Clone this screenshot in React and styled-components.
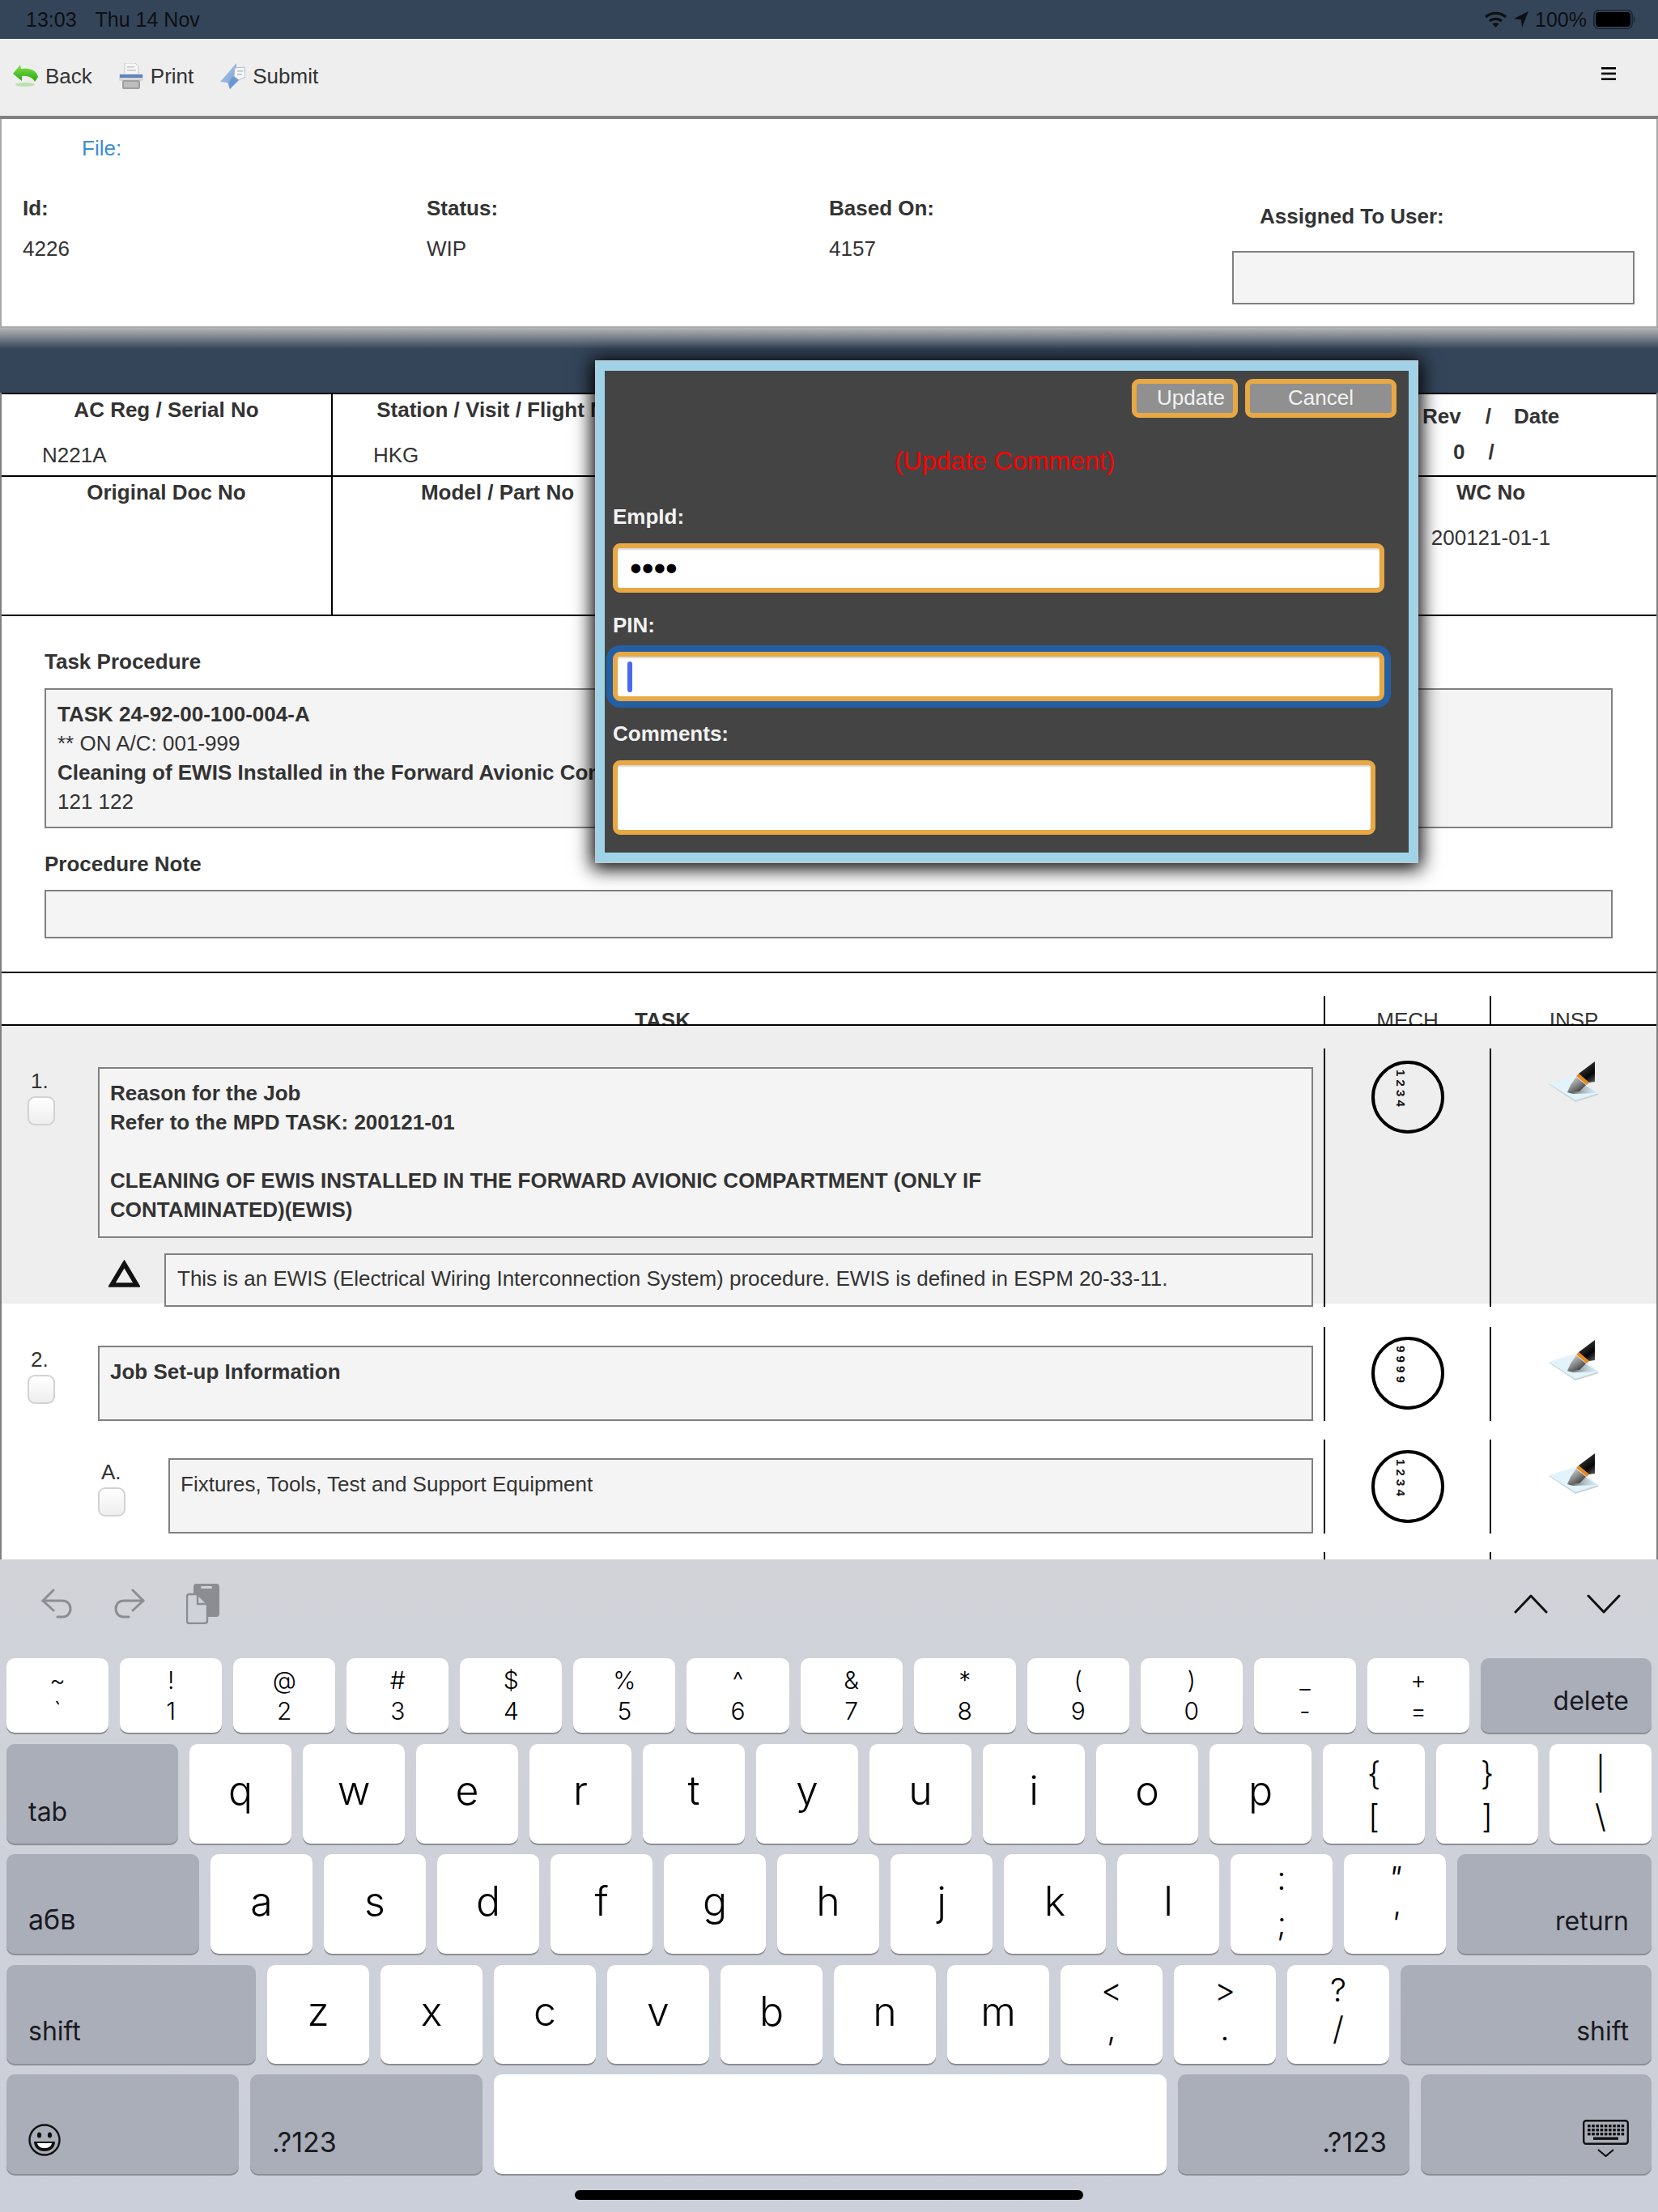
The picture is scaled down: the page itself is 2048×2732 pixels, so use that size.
import React from 'react';
import styled, { createGlobalStyle } from 'styled-components';

const GlobalStyle = createGlobalStyle`
  html, body { margin: 0; padding: 0; background: #fff; }
  * { box-sizing: border-box; }
`;

const Screen = styled.div`
  position: relative;
  display: flex;
  flex-direction: column;
  width: 2048px;
  height: 2732px;
  overflow: hidden;
  font-family: "Liberation Sans", Arial, sans-serif;
  font-size: 26px;
  line-height: 30px;
  color: #333;
`;

/* status bar */
const StatusBar = styled.div`
  flex: none;
  display: flex;
  justify-content: space-between;
  align-items: center;
  height: 48px;
  padding: 0 27px 0 32px;
  background: #34455a;
  color: #0d0f12;
  font-size: 25px;
`;
const StatusLeft = styled.div`
  display: flex;
  gap: 23px;
`;
const StatusRight = styled.div`
  display: flex;
  align-items: center;
  gap: 8px;
`;

/* app toolbar */
const Toolbar = styled.div`
  flex: none;
  display: flex;
  align-items: center;
  gap: 33px;
  height: 99px;
  padding: 0 52px 4px 16px;
  background: #eeeeee;
  border-bottom: 4px solid #808080;
`;
const ToolItem = styled.div`
  display: flex;
  align-items: center;
  gap: 9px;
`;
/* the toolbar glyphs are soft, upscaled bitmaps in the app */
const SoftIcon = styled.span`
  display: flex;
  filter: blur(0.6px);
`;
const MenuIcon = styled.svg`
  display: block;
  margin-left: auto;
  margin-bottom: 5px;
`;

/* top info panel */
const InfoPanel = styled.div`
  flex: none;
  height: 258px;
  padding-top: 21px;
  background: #fff;
  border: solid #a9a9a9;
  border-width: 0 2px 2px 2px;
`;
const FileLink = styled.div`
  padding-left: 99px;
  color: #3c8dd0;
`;
const InfoGrid = styled.div`
  display: grid;
  grid-template-columns: 499px 497px 498px 497px;
  margin-top: 44px;
  padding-left: 26px;
`;
const Label = styled.div`
  font-weight: bold;
`;
const InfoValue = styled.div`
  margin-top: 20px;
`;
const AssignedCol = styled.div`
  padding-top: 10px;
`;
const AssignedLabel = styled(Label)`
  padding-left: 34px;
`;
const ReadOnlyBox = styled.div`
  background: #f4f4f4;
  border: 2px solid #808080;
  height: ${p => p.$height}px;
`;
const AssignedBox = styled(ReadOnlyBox)`
  margin-top: 28px;
`;

const Band = styled.div`
  flex: none;
  height: 80px;
  background: linear-gradient(180deg, #b5b5b5 0, #34455a 26px);
`;

/* scrolling sheet */
const Sheet = styled.div`
  flex: 1;
  min-height: 0;
  overflow: hidden;
  background: #fff;
  border: solid #808080;
  border-width: 0 2px;
`;
const HeadRow = styled.div`
  display: grid;
  grid-template-columns: 409px 407px 819px 409px;
  height: ${p => p.$height}px;
  border-top: 2px solid #000;
`;
const HeadCell = styled.div`
  padding-top: 4px;
  border-right: ${p => (p.$divider ? '2px solid #000' : 'none')};
`;
const HeadLabel = styled.div`
  font-weight: bold;
  text-align: center;
  white-space: nowrap;
  overflow: hidden;
`;
const HeadValue = styled.div`
  margin-top: 26px;
  padding-left: 50px;
`;
const CenterValue = styled.div`
  margin-top: 26px;
  text-align: center;
`;
const RevHead = styled.div`
  display: flex;
  padding: 12px 0 0 120px;
  font-weight: bold;
`;
const RevSlash = styled.span`
  margin: 0 ${p => p.$gap}px 0 ${p => p.$before}px;
`;
const RevValues = styled.div`
  display: flex;
  gap: 29px;
  margin-top: 14px;
  padding-left: 158px;
  font-weight: bold;
`;

const Procedure = styled.div`
  padding: 41px 54px 41px 53px;
  border-top: 2px solid #000;
  border-bottom: 2px solid #000;
`;
const ProcedureBox = styled(ReadOnlyBox)`
  margin-top: ${p => p.$top}px;
  padding: 12px 14px;
  line-height: 36px;
  white-space: nowrap;
  overflow: hidden;
`;
const NoteLabel = styled(Label)`
  margin-top: 29px;
`;

const taskColumns = '1633px 205px 206px';

const TaskHead = styled.div`
  display: grid;
  grid-template-columns: ${taskColumns};
  height: 65px;
  padding-top: 28px;
  border-bottom: 2px solid #000;
`;
const TaskHeadCell = styled.div`
  height: 35px;
  padding-top: 15px;
  overflow: hidden;
  text-align: center;
  font-weight: ${p => (p.$bold ? 'bold' : 'normal')};
  border-left: ${p => (p.$bold ? 'none' : '2px solid #000')};
`;
const TaskRow = styled.div`
  display: grid;
  grid-template-columns: ${taskColumns};
  height: ${p => p.$height}px;
  padding-top: ${p => p.$top}px;
  background: ${p => (p.$shaded ? '#eeeeee' : 'transparent')};
`;
const TaskMain = styled.div`
  padding: 23px 13px 0 0;
  min-width: 0;
`;
const TaskLine = styled.div`
  display: flex;
  padding-left: ${p => p.$indent}px;
`;
const NumberCol = styled.div`
  flex: none;
  width: ${p => p.$width}px;
  padding-left: 4px;
  padding-top: 2px;
`;
const Checkbox = styled.div`
  width: 34px;
  height: 36px;
  margin: 4px 0 0 -4px;
  border: 2px solid #d2d2d2;
  border-radius: 9px;
  background: linear-gradient(180deg, #ffffff, #eeeeee);
`;
const TaskBox = styled(ReadOnlyBox)`
  flex: 1;
  padding: 12px 13px;
  line-height: 36px;
  font-weight: ${p => (p.$bold ? 'bold' : 'normal')};
`;
const WarningLine = styled.div`
  display: flex;
  align-items: flex-start;
  gap: 30px;
  margin-top: 19px;
  padding-left: 132px;
`;
const TriangleIcon = styled.svg`
  flex: none;
  margin-top: 8px;
`;
const WarningBox = styled(ReadOnlyBox)`
  flex: 1;
  padding: 14px 14px;
`;
const SignCell = styled.div`
  display: flex;
  justify-content: center;
  padding-top: ${p => p.$top}px;
  border-left: 2px solid #000;
`;
const StampCircle = styled.div`
  display: flex;
  justify-content: center;
  width: 90px;
  height: 90px;
  padding: 7px 18px 0 0;
  border: 4px solid #000;
  border-radius: 50%;
`;
const StampText = styled.span`
  writing-mode: vertical-rl;
  font-size: 15px;
  line-height: 16px;
  font-weight: bold;
  color: #111;
  white-space: pre;
`;

/* modal */
const Modal = styled.div`
  position: absolute;
  left: 736px;
  top: 446px;
  width: 1015px;
  height: 619px;
  padding: 10px 15px 22px 10px;
  background: #444444;
  border: solid #a0d3e8;
  border-width: 12px 11px;
  box-shadow: 0 0 0 1px #c9c9c9, 0 3px 22px 5px #000;
`;
const ModalButtons = styled.div`
  display: flex;
  justify-content: flex-end;
  gap: 9px;
`;
const ModalButton = styled.div`
  width: ${p => p.$width}px;
  height: 48px;
  padding-left: ${p => p.$left}px;
  border: 6px solid #e8a844;
  border-radius: 9px;
  background: #909090;
  color: #f2f2f2;
  line-height: 34px;
  text-align: ${p => (p.$left ? 'left' : 'center')};
`;
const ModalTitle = styled.div`
  margin-top: 35px;
  text-align: center;
  color: #ff0000;
  font-size: 32px;
  line-height: 37px;
`;
const ModalLabel = styled.div`
  margin-top: ${p => p.$top}px;
  font-weight: bold;
  color: #f2f2f2;
`;
const ModalField = styled.div`
  display: flex;
  align-items: center;
  width: ${p => p.$width}px;
  height: ${p => p.$height}px;
  margin-top: 18px;
  padding-left: 15px;
  border: 6px solid #e8a844;
  border-radius: 9px;
  background: #fff;
  box-shadow: inset 0 2px 2px rgba(0, 0, 0, 0.16)${p => (p.$focused ? ', 0 0 0 8px #245fa3' : '')};
  color: #000;
`;
const Dots = styled.span`
  font-size: 42px;
  line-height: 40px;
`;
const Caret = styled.span`
  display: block;
  width: 6px;
  height: 38px;
  margin-left: -3px;
  border-radius: 3px;
  background: #4a68f0;
`;

/* on-screen keyboard */
const Keyboard = styled.div`
  flex: none;
  height: 806px;
  padding: 0 8px;
  background: linear-gradient(180deg, #d1d3d9, #cbcfd9);
  font-family: Inter, "Liberation Sans", sans-serif;
  color: #000;
`;
const KeyboardBar = styled.div`
  display: flex;
  align-items: center;
  height: 122px;
  padding: 0 38px 13px 43px;
`;
const BarGap = styled.div`
  flex: ${p => (p.$width ? 'none' : '1')};
  width: ${p => p.$width || 0}px;
`;
const KeyRow = styled.div`
  display: flex;
  gap: 14px;
  height: ${p => p.$height}px;
  margin-bottom: 13.5px;
`;
const Key = styled.div`
  flex: ${p => (p.$width ? 'none' : '1')};
  width: ${p => p.$width || 126}px;
  display: flex;
  flex-direction: column;
  align-items: center;
  justify-content: center;
  padding-bottom: 8px;
  border-radius: 10px;
  background: #fff;
  box-shadow: 0 2px 0 #8b8e93;
  font-size: 50px;
  font-weight: 300;
  line-height: 50px;
`;
const FnKey = styled(Key)`
  align-items: ${p => (p.$right ? 'flex-end' : 'flex-start')};
  justify-content: flex-end;
  padding: 0 ${p => (p.$right ? 28 : 0)}px ${p => p.$bottom || 21}px ${p => (p.$right ? 0 : 27)}px;
  background: #aaaeb9;
  font-size: ${p => p.$size || 32}px;
  font-weight: 400;
  line-height: 36px;
  color: #1a1a1f;
`;
const SpaceKey = styled(Key)`
  flex: 1;
`;
const DualKey = styled(Key)`
  justify-content: flex-start;
  padding: ${p => p.$top}px 0 0;
  font-size: ${p => p.$size}px;
  font-weight: 300;
  line-height: ${p => p.$line}px;
  font-style: ${p => (p.$slant ? 'italic' : 'normal')};
`;
const HomeBar = styled.div`
  width: 628px;
  height: 12px;
  margin: 20px auto 0;
  border-radius: 6px;
  background: #000;
`;
const FlipIcon = styled.svg`
  flex: none;
  transform: ${p => (p.$flip ? 'scaleX(-1)' : 'none')};
`;

const PenIcon = () => (
  <SoftIcon>
    <svg width="62" height="50" viewBox="0 0 62 50">
      <defs>
        <linearGradient id="penBody" x1="0.2" y1="0" x2="0.8" y2="1">
          <stop offset="0" stopColor="#9a9a9a" />
          <stop offset="0.32" stopColor="#2a2a2a" />
          <stop offset="0.7" stopColor="#050505" />
          <stop offset="1" stopColor="#4c4c4c" />
        </linearGradient>
        <linearGradient id="penNib" x1="0" y1="0" x2="0.8" y2="1">
          <stop offset="0" stopColor="#e6e6e6" />
          <stop offset="0.55" stopColor="#8a8a8a" />
          <stop offset="1" stopColor="#2e2e2e" />
        </linearGradient>
        <linearGradient id="penShade" x1="0" y1="0" x2="1" y2="0">
          <stop offset="0" stopColor="#3d3d3d" />
          <stop offset="1" stopColor="#bcd0d8" stopOpacity="0.2" />
        </linearGradient>
      </defs>
      <polygon points="0,28 32,18 62,41 33,50" fill="#c9d3d8" />
      <polygon points="0,27 32,17 62,39 33,48" fill="#e2f3fb" />
      <polygon points="23,38 45,29 60,39 30,40" fill="url(#penShade)" />
      <polygon points="34,19 46,29 38,37 23,38 27,29" fill="url(#penNib)" />
      <polygon points="34,18 37,15 50,26 47,29" fill="#e8891c" />
      <polygon points="37,15 57,0 57,25 50,26" fill="url(#penBody)" />
    </svg>
  </SoftIcon>
);

const BackIcon = () => (
  <SoftIcon>
    <svg width="31" height="28" viewBox="0 0 31 28">
      <defs>
        <linearGradient id="backGreen" x1="0" y1="0" x2="0" y2="1">
          <stop offset="0" stopColor="#86e34c" />
          <stop offset="1" stopColor="#24a60e" />
        </linearGradient>
      </defs>
      <ellipse cx="15" cy="24.5" rx="12" ry="2.4" fill="#b5dba8" opacity="0.85" />
      <path d="M0 11 L9 0 L10 5 C19 3 29 6 31 15 L27 21 C25 16 18 13 11 14 L11 20 Z" fill="url(#backGreen)" />
    </svg>
  </SoftIcon>
);

const PrintIcon = () => (
  <SoftIcon>
    <svg width="30" height="32" viewBox="0 0 30 32">
      <path d="M7 0 H20 L24 4 V14 H7 Z" fill="#f6f6f6" stroke="#c9c9c9" />
      <rect x="10" y="4" width="9" height="1.5" fill="#c4c4c4" />
      <rect x="10" y="8" width="11" height="1.5" fill="#c4c4c4" />
      <rect x="0" y="13" width="30" height="9" rx="2" fill="#d6d6d6" />
      <rect x="1" y="14" width="28" height="4" fill="#5f86bd" />
      <rect x="4" y="21" width="22" height="11" rx="2" fill="#9f9f9f" />
      <rect x="6" y="23" width="18" height="7" fill="#bdbdbd" />
    </svg>
  </SoftIcon>
);

const SubmitIcon = () => (
  <SoftIcon>
    <svg width="31" height="32" viewBox="0 0 31 32">
      <defs>
        <linearGradient id="submitBlue" x1="0" y1="0" x2="1" y2="1">
          <stop offset="0" stopColor="#b4cdec" />
          <stop offset="1" stopColor="#6a97d0" />
        </linearGradient>
      </defs>
      <path d="M20 0 L0 23 L9 24 L12 32 L24 18 L20 8 Z" fill="url(#submitBlue)" />
      <path d="M18 6 L30 5 L31 17 L23 21 L17 16 Z" fill="#f6f7f9" stroke="#aeb8c6" />
      <rect x="21" y="9" width="7" height="1.5" fill="#aebdd0" />
      <rect x="21" y="13" width="6" height="1.5" fill="#aebdd0" />
      <path d="M15 17 L23 21 L12 32 L11 24 Z" fill="#6a97d0" />
    </svg>
  </SoftIcon>
);

const WifiIcon = () => (
  <svg width="29" height="20" viewBox="0 0 29 20" fill="none" stroke="#0d0f12" strokeWidth="3.2">
    <path d="M2 7 C9 0.8 20 0.8 27 7" />
    <path d="M7 12 C11 8.5 18 8.5 22 12" />
    <path d="M14.5 20 L10.5 15.5 C12.5 13.8 16.5 13.8 18.5 15.5 Z" fill="#0d0f12" stroke="none" />
  </svg>
);

const LocationIcon = () => (
  <svg width="18" height="20" viewBox="0 0 18 20">
    <polygon points="18,0 0,9 9,10.5 10,20" fill="#0d0f12" />
  </svg>
);

const BatteryIcon = () => (
  <svg width="53" height="24" viewBox="0 0 53 24">
    <rect x="0.8" y="0.8" width="47.4" height="22.4" rx="6" fill="none" stroke="#1a2430" strokeWidth="1.6" />
    <rect x="3" y="3" width="43" height="18" rx="4" fill="#000" />
    <path d="M50 8 C52 9 52 15 50 16 Z" fill="#1a2430" />
  </svg>
);

const WarningTriangle = () => (
  <TriangleIcon width="39" height="34" viewBox="0 0 39 34">
    <polygon points="19.5,5 35,31 4,31" fill="none" stroke="#111" strokeWidth="5.5" />
  </TriangleIcon>
);

const UndoIcon = ({ flip }) => (
  <FlipIcon
    $flip={flip}
    width="38"
    height="37"
    viewBox="0 0 38 37"
    fill="none"
    stroke="#8b8d93"
    strokeWidth="3"
    strokeLinecap="round"
    strokeLinejoin="round"
  >
    <path d="M15 2 L2 15 L15 27" />
    <path d="M2 15 H26 C32 15 36 19 36 25 C36 31 32 35 26 35 H20" />
  </FlipIcon>
);

const PasteIcon = () => (
  <svg width="41" height="50" viewBox="0 0 41 50">
    <rect x="9" y="0" width="32" height="41" rx="4" fill="#8b8d93" />
    <rect x="18" y="3" width="14" height="3" rx="1.5" fill="#d0d2d8" />
    <path d="M4 13 H14 L26 25 V46 C26 48 24 49 22 49 H4 C2 49 1 48 1 46 V16 C1 14 2 13 4 13 Z" fill="#cfd2d9" stroke="#8b8d93" strokeWidth="2.4" />
    <path d="M14 13 V25 H26" fill="none" stroke="#8b8d93" strokeWidth="2.4" />
  </svg>
);

const Chevron = ({ up }) => (
  <svg width="42" height="24" viewBox="0 0 42 24" fill="none" stroke="#111" strokeWidth="3" strokeLinecap="round" strokeLinejoin="round">
    <path d={up ? 'M2 22 L21 2 L40 22' : 'M2 2 L21 22 L40 2'} />
  </svg>
);

const EmojiIcon = () => (
  <svg width="40" height="40" viewBox="0 0 40 40">
    <circle cx="20" cy="20" r="18.5" fill="none" stroke="#111" strokeWidth="2.4" />
    <ellipse cx="13.5" cy="14" rx="2.6" ry="3.6" fill="#111" />
    <ellipse cx="26.5" cy="14" rx="2.6" ry="3.6" fill="#111" />
    <path d="M7 22 H33 C33 30 27 34 20 34 C13 34 7 30 7 22 Z" fill="#111" />
    <path d="M11 24 H29 C28 28 25 30 20 30 C15 30 12 28 11 24 Z" fill="#fff" />
  </svg>
);

const HideKeyboardIcon = () => (
  <svg width="57" height="46" viewBox="0 0 57 46">
    <rect x="1.2" y="1.2" width="54.6" height="28.6" rx="3" fill="none" stroke="#111" strokeWidth="2.4" />
    {[6, 11, 16].map(y =>
      Array.from({ length: 9 }).map((_, i) => (
        <rect key={`${y}-${i}`} x={6 + i * 5.2} y={y} width="3.6" height="3.4" fill="#111" />
      ))
    )}
    <rect x="13" y="21.5" width="31" height="3.4" fill="#111" />
    <path d="M19 37 L28.5 45 L38 37" fill="none" stroke="#111" strokeWidth="2.2" />
  </svg>
);

const numberKeys = [
  ['~', '`'], ['!', '1'], ['@', '2'], ['#', '3'], ['$', '4'], ['%', '5'], ['^', '6'],
  ['&', '7'], ['*', '8'], ['(', '9'], [')', '0'], ['_', '-'], ['+', '='],
];

const Dual = ({ keys, top, size, line, slant }) =>
  keys.map(([upper, lower]) => (
    <DualKey key={upper} $top={top} $size={size} $line={line} $slant={slant}>
      <span>{upper}</span>
      <span>{lower}</span>
    </DualKey>
  ));

const Letters = ({ chars }) => chars.split('').map(c => <Key key={c}>{c}</Key>);

const Stamp = ({ code }) => (
  <StampCircle>
    <StampText>{code}</StampText>
  </StampCircle>
);

export default function App() {
  return (
    <Screen>
      <GlobalStyle />
      <StatusBar>
        <StatusLeft>
          <span>13:03</span>
          <span>Thu 14 Nov</span>
        </StatusLeft>
        <StatusRight>
          <WifiIcon />
          <LocationIcon />
          <span>100%</span>
          <BatteryIcon />
        </StatusRight>
      </StatusBar>

      <Toolbar>
        <ToolItem><BackIcon />Back</ToolItem>
        <ToolItem><PrintIcon />Print</ToolItem>
        <ToolItem><SubmitIcon />Submit</ToolItem>
        <MenuIcon width="18" height="16" viewBox="0 0 18 16">
          <rect y="0" width="18" height="2.6" fill="#000" />
          <rect y="6.6" width="18" height="2.6" fill="#000" />
          <rect y="13.4" width="18" height="2.6" fill="#000" />
        </MenuIcon>
      </Toolbar>

      <InfoPanel>
        <FileLink>File:</FileLink>
        <InfoGrid>
          <div><Label>Id:</Label><InfoValue>4226</InfoValue></div>
          <div><Label>Status:</Label><InfoValue>WIP</InfoValue></div>
          <div><Label>Based On:</Label><InfoValue>4157</InfoValue></div>
          <AssignedCol>
            <AssignedLabel>Assigned To User:</AssignedLabel>
            <AssignedBox $height={66} />
          </AssignedCol>
        </InfoGrid>
      </InfoPanel>

      <Band />

      <Sheet>
        <HeadRow $height={102}>
          <HeadCell $divider>
            <HeadLabel>AC Reg / Serial No</HeadLabel>
            <HeadValue>N221A</HeadValue>
          </HeadCell>
          <HeadCell>
            <HeadLabel>Station / Visit / Flight No</HeadLabel>
            <HeadValue>HKG</HeadValue>
          </HeadCell>
          <HeadCell />
          <div>
            <RevHead>
              Rev<RevSlash $before={30} $gap={28}>/</RevSlash>Date
            </RevHead>
            <RevValues><span>0</span><span>/</span></RevValues>
          </div>
        </HeadRow>
        <HeadRow $height={172}>
          <HeadCell $divider>
            <HeadLabel>Original Doc No</HeadLabel>
          </HeadCell>
          <HeadCell>
            <HeadLabel>Model / Part No</HeadLabel>
          </HeadCell>
          <HeadCell />
          <HeadCell>
            <HeadLabel>WC No</HeadLabel>
            <CenterValue>200121-01-1</CenterValue>
          </HeadCell>
        </HeadRow>

        <Procedure>
          <Label>Task Procedure</Label>
          <ProcedureBox $height={173} $top={18}>
            <Label>TASK 24-92-00-100-004-A</Label>
            <div>** ON A/C: 001-999</div>
            <Label>Cleaning of EWIS Installed in the Forward Avionic Compartment</Label>
            <div>121 122</div>
          </ProcedureBox>
          <NoteLabel>Procedure Note</NoteLabel>
          <ProcedureBox $height={60} $top={17} />
        </Procedure>

        <TaskHead>
          <TaskHeadCell $bold>TASK</TaskHeadCell>
          <TaskHeadCell>MECH</TaskHeadCell>
          <TaskHeadCell>INSP</TaskHeadCell>
        </TaskHead>

        <TaskRow $shaded $height={343} $top={28}>
          <TaskMain>
            <TaskLine $indent={32}>
              <NumberCol $width={87}>1.<Checkbox /></NumberCol>
              <TaskBox $height={211} $bold>
                Reason for the Job<br />
                Refer to the MPD TASK: 200121-01<br />
                <br />
                CLEANING OF EWIS INSTALLED IN THE FORWARD AVIONIC COMPARTMENT (ONLY IF<br />
                CONTAMINATED)(EWIS)
              </TaskBox>
            </TaskLine>
            <WarningLine>
              <WarningTriangle />
              <WarningBox $height={66}>
                This is an EWIS (Electrical Wiring Interconnection System) procedure. EWIS is defined in ESPM 20-33-11.
              </WarningBox>
            </WarningLine>
          </TaskMain>
          <SignCell $top={15}><Stamp code="1 2 3 4" /></SignCell>
          <SignCell $top={16}><PenIcon /></SignCell>
        </TaskRow>

        <TaskRow $height={139} $top={29}>
          <TaskMain>
            <TaskLine $indent={32}>
              <NumberCol $width={87}>2.<Checkbox /></NumberCol>
              <TaskBox $height={93} $bold>Job Set-up Information</TaskBox>
            </TaskLine>
          </TaskMain>
          <SignCell $top={12}><Stamp code="9 9 9 9" /></SignCell>
          <SignCell $top={16}><PenIcon /></SignCell>
        </TaskRow>

        <TaskRow $height={139} $top={29}>
          <TaskMain>
            <TaskLine $indent={119}>
              <NumberCol $width={87}>A.<Checkbox /></NumberCol>
              <TaskBox $height={93}>Fixtures, Tools, Test and Support Equipment</TaskBox>
            </TaskLine>
          </TaskMain>
          <SignCell $top={13}><Stamp code="1 2 3 4" /></SignCell>
          <SignCell $top={17}><PenIcon /></SignCell>
        </TaskRow>

        <TaskRow $height={40} $top={29}>
          <TaskMain />
          <SignCell $top={0} />
          <SignCell $top={0} />
        </TaskRow>
      </Sheet>

      <Keyboard>
        <KeyboardBar>
          <UndoIcon />
          <BarGap $width={52} />
          <UndoIcon flip />
          <BarGap $width={51} />
          <PasteIcon />
          <BarGap />
          <Chevron up />
          <BarGap $width={48} />
          <Chevron />
        </KeyboardBar>

        <KeyRow $height={92}>
          <Dual keys={numberKeys} top={8} size={30} line={38} />
          <FnKey $right $width={211}>delete</FnKey>
        </KeyRow>
        <KeyRow $height={123}>
          <FnKey $width={212}>tab</FnKey>
          <Letters chars="qwertyuiop" />
          <Dual keys={[['{', '['], ['}', ']'], ['|', '\\']]} top={10} size={40} line={53} />
        </KeyRow>
        <KeyRow $height={123}>
          <FnKey $width={238} $size={34} $bottom={24}>абв</FnKey>
          <Letters chars="asdfghjkl" />
          <Dual keys={[[':', ';']]} top={2} size={40} line={56} />
          <Dual keys={[['"', "'"]]} top={2} size={40} line={56} slant />
          <FnKey $right $width={240} $bottom={22}>return</FnKey>
        </KeyRow>
        <KeyRow $height={122}>
          <FnKey $width={308} $bottom={22}>shift</FnKey>
          <Letters chars="zxcvbnm" />
          <Dual keys={[['<', ','], ['>', '.'], ['?', '/']]} top={7} size={40} line={48} />
          <FnKey $right $width={310} $bottom={22}>shift</FnKey>
        </KeyRow>
        <KeyRow $height={123}>
          <FnKey $width={287} $bottom={22}><EmojiIcon /></FnKey>
          <FnKey $width={287} $size={34}>.?123</FnKey>
          <SpaceKey />
          <FnKey $right $width={286} $size={34}>.?123</FnKey>
          <FnKey $right $width={285}><HideKeyboardIcon /></FnKey>
        </KeyRow>
        <HomeBar />
      </Keyboard>

      <Modal>
        <ModalButtons>
          <ModalButton $width={131} $left={25}>Update</ModalButton>
          <ModalButton $width={187}>Cancel</ModalButton>
        </ModalButtons>
        <ModalTitle>(Update Comment)</ModalTitle>
        <ModalLabel $top={35}>EmpId:</ModalLabel>
        <ModalField $width={953} $height={61}><Dots>••••</Dots></ModalField>
        <ModalLabel $top={25}>PIN:</ModalLabel>
        <ModalField $width={953} $height={61} $focused><Caret /></ModalField>
        <ModalLabel $top={25}>Comments:</ModalLabel>
        <ModalField $width={942} $height={92} />
      </Modal>
    </Screen>
  );
}
